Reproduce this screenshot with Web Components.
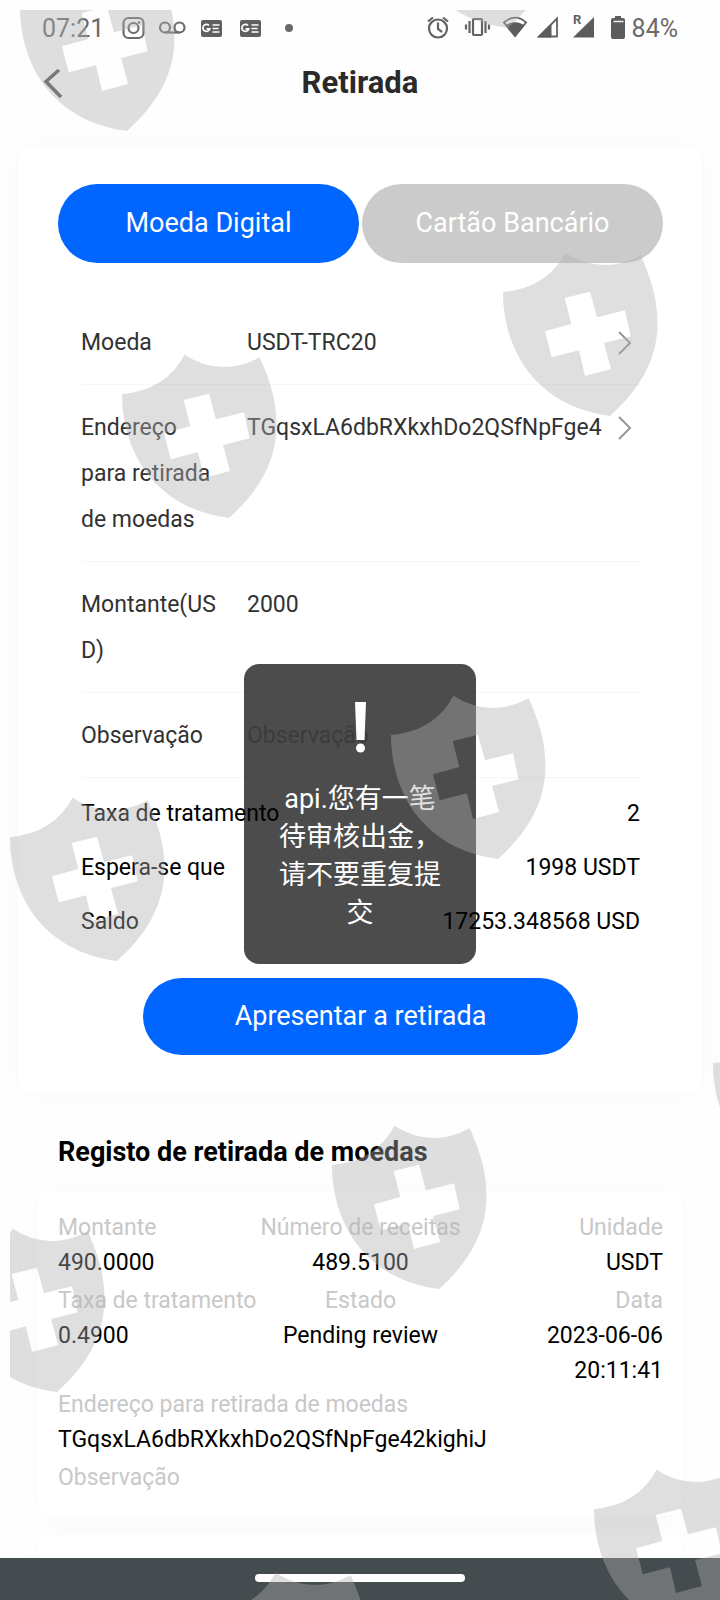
<!DOCTYPE html>
<html lang="pt">
<head>
<meta charset="utf-8">
<meta name="viewport" content="width=device-width, initial-scale=1">
<title>Retirada</title>
<style>
  body { margin: 0; font-family: Roboto, "Noto Sans CJK SC", sans-serif; font-size: 23px; color: #000; background: #fefefe; }
</style>
</head>
<body>
<withdraw-app></withdraw-app>

<script>
const define = (name, html, setup) => {
  const template = document.createElement('template');
  template.innerHTML = html;
  customElements.define(name, class extends HTMLElement {
    constructor() {
      super();
      this.attachShadow({ mode: 'open' }).append(template.content.cloneNode(true));
    }
    connectedCallback() {
      if (setup) setup(this, this.shadowRoot);
    }
  });
};

define('status-bar', `
  <style>
    :host { display: flex; align-items: center; justify-content: space-between; height: 56px; padding: 0 42px; color: #6a6a6a; font-size: 25px; }
    div { display: flex; align-items: center; gap: 14px; }
    .right { gap: 4px; }
    svg { display: block; }
  </style>
  <div>
    <span>07:21</span>
    <svg width="178" height="30" viewBox="118 12 178 30" fill="none" stroke="#6a6a6a" stroke-width="2.200">
      <rect x="123.500" y="17" width="20" height="20" rx="5"/><circle cx="133.500" cy="27" r="5"/><circle cx="139" cy="21.500" r="1.300" fill="#6a6a6a" stroke="none"/>
      <circle cx="165" cy="26.500" r="5"/><circle cx="179.500" cy="26.500" r="5"/><path d="M165 31.500h14.500"/>
      <g id="news" stroke="none"><rect x="201" y="19" width="21" height="17" rx="2" fill="#606060"/><path d="M209 24.500a3.500 3.500 0 1 0 .8 3.300h-3.300M212.500 24h7M212.500 27.500h6M212.500 31h7" stroke="#fff" stroke-width="1.700"/></g>
      <use href="#news" x="39"/>
      <circle cx="289" cy="27" r="4" fill="#6a6a6a" stroke="none"/>
    </svg>
  </div>
  <div class="right">
    <svg width="204" height="30" viewBox="424 12 204 30" fill="none" stroke="#626262" stroke-width="2.200">
      <circle cx="438" cy="27.500" r="9"/><path d="M438 21.500v6.500l4 3M428 20.500l5-4M448 20.500l-5-4"/>
      <rect x="473" y="18" width="9" height="16" rx="1"/><path d="M469.500 20v12M485.500 20v12M466 23.500v5M489 23.500v5"/>
      <path d="M504 21.500c7-6.500 15.500-6.500 22 0L515 35z" stroke-width="1.800"/><path d="M505.500 24.500c6-4.500 13-4.500 19 0L515 36z" fill="#5c5c5c" stroke="none"/>
      <path d="M539 35.500l18-18v18z" stroke-width="1.800"/><path d="M537.500 36.500l14-14v14z" fill="#5c5c5c" stroke="none"/>
      <path d="M573 36.500L594 16v20.500z" fill="#5c5c5c" stroke="none"/>
      <text x="573" y="23" font-size="13" font-weight="700" fill="#626262" stroke="none">R</text>
      <path d="M613 17h2v-2h6v2h2q2 0 2 2V36q0 2-2 2h-10q-2 0-2-2V19q0-2 2-2z" fill="#5c5c5c" stroke="none"/><path d="M613.500 20.500h10" stroke="#eee" stroke-width="1.500"/>
    </svg>
    <span>84%</span>
  </div>
`);

define('nav-header', `
  <style>
    :host { display: grid; grid-template-columns: 80px 1fr 80px; align-items: center; height: 54px; color: #2a2a2a; }
    button { border: 0; background: none; padding: 2px 0 0 42px; height: 54px; }
    svg { display: block; }
    h1 { margin: 0; font-size: 31px; line-height: 40px; font-weight: 700; text-align: center; }
  </style>
  <button type="button" aria-label="Voltar"><svg width="21" height="30" viewBox="0 0 21 30" fill="none" stroke="#555" stroke-width="3.500"><path d="M17 1L4 12.500 19 28"/></svg></button>
  <h1><slot></slot></h1>
`);

define('tab-button', `
  <style>
    :host { display: block; flex: 1; }
    button { width: 100%; height: 79px; border: 0; border-radius: 40px; padding: 0 0 1px; background: #cbcbcb; color: #fff; font: inherit; font-size: 27px; line-height: 36px; }
    :host([active]) button { background: #0066ff; }
  </style>
  <button type="button"><slot></slot></button>
`);

define('form-row', `
  <style>
    :host { display: flex; align-items: flex-start; gap: 21px; padding: 20px 0 18px; border-bottom: 1px solid #f6f6f6; color: #323233; line-height: 46px; }
    label { width: 145px; overflow-wrap: anywhere; flex: none; }
    .field { flex: 1; display: flex; align-items: center; min-width: 0; }
    input { flex: 1; min-width: 0; height: 46px; border: 0; padding: 0; background: none; font: inherit; color: inherit; outline: 0; }
    input::placeholder { color: #c8c9cc; opacity: 1; }
    svg { display: none; margin: 0 8px 0 12px; }
    :host([link]) svg { display: block; }
  </style>
  <label for="field"></label>
  <div class="field"><input id="field">
    <svg width="18" height="26" viewBox="0 0 18 26" fill="none" stroke="#969799" stroke-width="2"><path d="M3 2l11 11L3 24"/></svg>
  </div>
`, (host, root) => {
  root.querySelector('label').textContent = host.getAttribute('label');
  const input = root.querySelector('input');
  input.value = host.getAttribute('value') || '';
  input.placeholder = host.getAttribute('placeholder') || '';
  input.readOnly = host.hasAttribute('link');
});

define('summary-row', `
  <style>:host { display: flex; justify-content: space-between; line-height: 54px; }</style>
  <span><slot></slot></span><span><slot name="value"></slot></span>
`);

define('submit-button', `
  <style>
    :host { display: block; }
    button { width: 100%; height: 77px; border: 0; border-radius: 39px; padding: 0 0 1px; background: #0066ff; color: #fff; font: inherit; font-size: 27px; line-height: 36px; }
  </style>
  <button type="button"><slot></slot></button>
`);

define('white-card', `
  <style>
    :host { display: block; background: #fff; border-radius: 12px; box-shadow: 0 0 32px rgba(0, 0, 0, .025); }
  </style>
  <slot></slot>
`);

define('record-field', `
  <style>
    :host { display: block; }
    :host([align=center]) { text-align: center; }
    :host([align=right]) { text-align: right; }
    .label { line-height: 34px; color: #c8c8c8; white-space: nowrap; }
    .value { line-height: 35px; min-height: 39px; }
    :host([empty]) .value { display: none; }
  </style>
  <div class="label"></div><div class="value"><slot></slot></div>
`, (host, root) => { root.querySelector('.label').textContent = host.getAttribute('label'); });

define('toast-box', `
  <style>
    :host { position: absolute; left: 50%; top: 664px; transform: translateX(-50%); box-sizing: border-box; width: 232px; padding: 31px 30px 32px; border-radius: 15px; background: rgba(0, 0, 0, .7); color: #fff; text-align: center; font-size: 27px; line-height: 38px; }
    svg { display: block; margin: 0 auto 16px; }
  </style>
  <svg width="70" height="69" viewBox="0 0 70 69" fill="#fff"><path d="M30 7h11l-1.500 38h-8z"/><circle cx="35.500" cy="53" r="4.500"/></svg>
  <div role="alert"><slot></slot></div>
`);

define('shield-watermark', `
  <style>
    :host { position: absolute; inset: 0; overflow: hidden; pointer-events: none; }
    svg { display: block; }
  </style>
  <svg width="720" height="1600" viewBox="0 0 720 1600" aria-hidden="true">
    <defs>
      <clipPath id="frame"><rect x="10" y="10" width="710" height="1590"/></clipPath>
      <path id="shield" fill="#afafaf" fill-opacity=".4" fill-rule="evenodd" d="M0 0Q44-4 62.500-39.300Q99-16 137.700-36.700C146-18 154.500 4 154.500 31C154.500 68 136 98 107 124C31 114 0 56 0 0zM61.700 6L87-.3L94 25.300L122 18.300L127.700 44.300L101 51L108 77L82 84L76 58.300L48.700 65.300L42 39.300L68.300 32z"/>
    </defs>
    <g clip-path="url(#frame)">
      <use href="#shield" x="20" y="7"/><use href="#shield" x="401" y="-96"/>
      <use href="#shield" x="503" y="292"/><use href="#shield" x="122" y="394"/>
      <use href="#shield" x="391" y="735"/><use href="#shield" x="10" y="837"/>
      <use href="#shield" x="713" y="1063"/><use href="#shield" x="332" y="1165"/>
      <use href="#shield" x="-50" y="1268"/><use href="#shield" x="594" y="1509"/>
      <use href="#shield" x="213" y="1612"/>
    </g>
  </svg>
`);

define('gesture-bar', `
  <style>
    :host { display: flex; justify-content: center; height: 42px; background: #454c50; }
    span { width: 210px; height: 8px; margin-top: 16px; border-radius: 4px; background: #fff; }
  </style>
  <span></span>
`);

define('withdraw-app', `
  <style>
    :host { position: relative; display: flex; flex-direction: column; height: 100vh; overflow: hidden; }
    main { flex: 1; min-height: 0; overflow: hidden; }
    .form { margin: 36px 18px 0; padding: 38px 39px 38px 40px; }
    .tabs { display: flex; gap: 3px; margin-bottom: 37px; }
    .rows { margin: 0 21px 0 23px; }
    .summary { margin: 9px 23px 29px; }
    submit-button { margin: 0 85px; }
    h2 { margin: 39px 58px 19px; font-size: 27px; line-height: 40px; font-weight: 700; }
    .record { margin: 0 38px 20px; padding: 20px 19px 20px 20px; }
    .grid { display: grid; grid-template-columns: 1fr 1fr 1fr; }
    .wide { grid-column: 1 / -1; }
  </style>
  <status-bar></status-bar>
  <nav-header>Retirada</nav-header>
  <main>
    <white-card class="form">
      <div class="tabs"><tab-button active>Moeda Digital</tab-button><tab-button>Cartão Bancário</tab-button></div>
      <div class="rows">
        <form-row link label="Moeda" value="USDT-TRC20"></form-row>
        <form-row link label="Endereço para retirada de moedas" value="TGqsxLA6dbRXkxhDo2QSfNpFge4"></form-row>
        <form-row label="Montante(USD)" value="2000"></form-row>
        <form-row label="Observação" placeholder="Observação"></form-row>
      </div>
      <div class="summary">
        <summary-row>Taxa de tratamento<span slot="value">2</span></summary-row>
        <summary-row>Espera-se que<span slot="value">1998 USDT</span></summary-row>
        <summary-row>Saldo<span slot="value">17253.348568 USD</span></summary-row>
      </div>
      <submit-button>Apresentar a retirada</submit-button>
    </white-card>
    <h2>Registo de retirada de moedas</h2>
    <white-card class="record">
      <div class="grid">
        <record-field label="Montante">490.0000</record-field>
        <record-field label="Número de receitas" align="center">489.5100</record-field>
        <record-field label="Unidade" align="right">USDT</record-field>
        <record-field label="Taxa de tratamento">0.4900</record-field>
        <record-field label="Estado" align="center">Pending review</record-field>
        <record-field label="Data" align="right">2023-06-06<br>20:11:41</record-field>
        <record-field class="wide" label="Endereço para retirada de moedas">TGqsxLA6dbRXkxhDo2QSfNpFge42kighiJ</record-field>
        <record-field class="wide" label="Observação" empty></record-field>
      </div>
    </white-card>
    <white-card class="record"></white-card>
  </main>
  <gesture-bar></gesture-bar>
  <toast-box>api.您有一笔待审核出金，请不要重复提交</toast-box>
  <shield-watermark></shield-watermark>
`);
</script>
</body>
</html>
